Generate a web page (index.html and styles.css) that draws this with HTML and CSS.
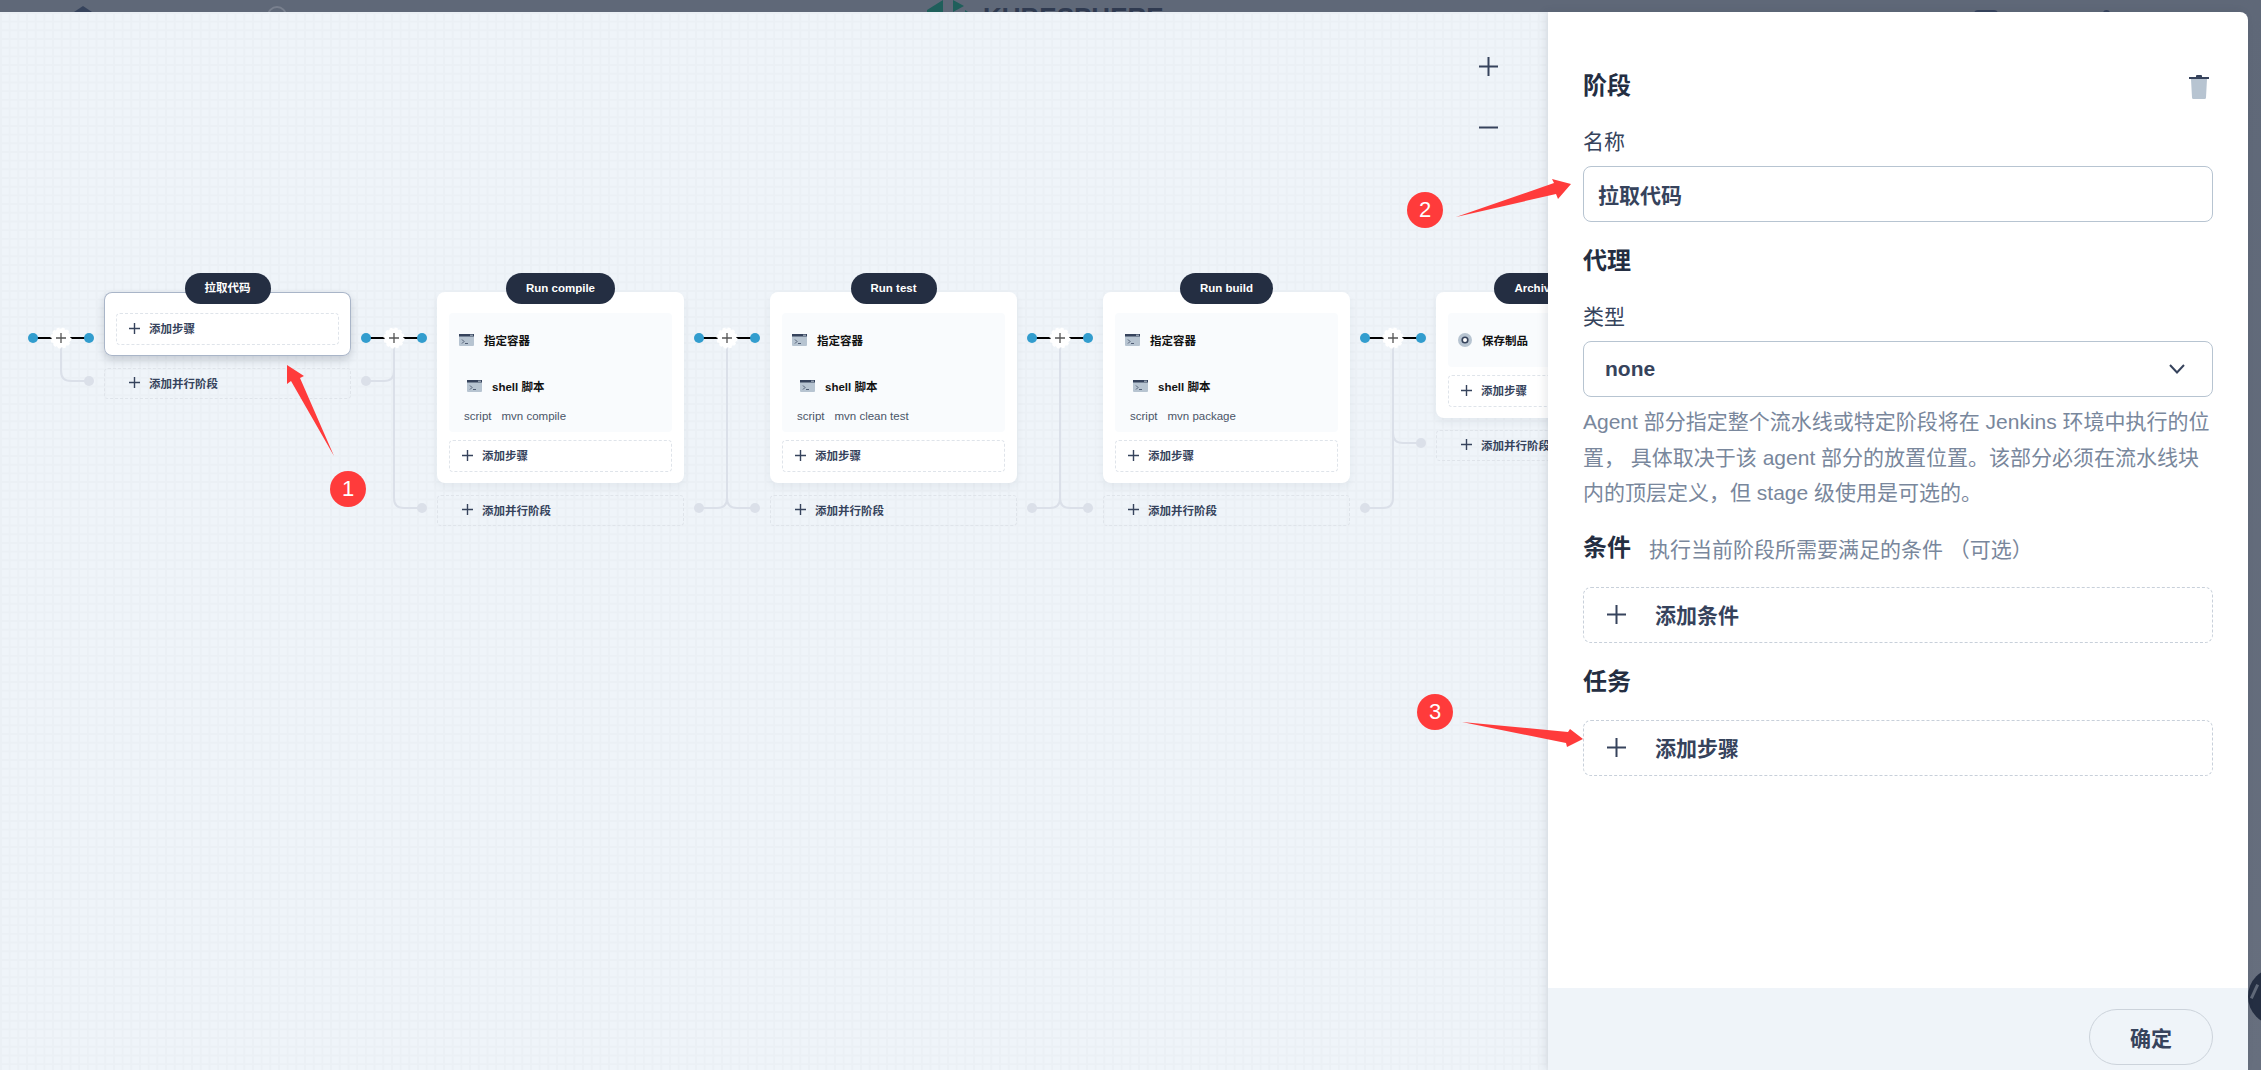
FILE: index.html

```html
<!DOCTYPE html>
<html lang="zh">
<head>
    <meta charset="UTF-8">
    <title>流水线</title>
    <link rel="stylesheet" href="styles.css">
</head>
<body>
    <svg class="defs" width="0" height="0">
        <symbol id="icon-plus" viewBox="0 0 11 11">
            <path d="M5.5 0V11M0 5.500H11" fill="none" stroke="currentColor" stroke-width="1.4"/>
        </symbol>
        <symbol id="icon-term" viewBox="0 0 15 12">
            <rect width="15" height="12" rx="1" fill="#b7c4d1"/>
            <rect width="15" height="2.500" fill="#36435c"/>
            <rect x="11" y="0.700" width="3" height="1" fill="#b7c4d1"/>
            <path d="M3 5.500L5 7.500L3 9.500M6 9.500H9" fill="none" stroke="#36435c" stroke-width="0.800"/>
        </symbol>
    </svg>

    <!-- page behind the dialog, only its lower edge shows -->
    <div class="topbar">
        <span class="top-bit top-home"></span>
        <span class="top-bit top-ring"></span>
        <svg class="top-logo" width="44" height="14" viewBox="0 0 44 14">
            <path d="M0 10L16 0V14H0Z M26 0L37 6L26 12Z M38 10L44 14H38Z" fill="#1f5f5b"/>
        </svg>
        <span class="top-brand">KUBESPHERE</span>
        <span class="top-bit top-user"></span>
        <span class="top-bit top-dot"></span>
    </div>

    <div class="main">
        <div class="canvas">
            <div class="zoom-btns">
                <svg class="zoom-icon" viewBox="0 0 19 19"><path d="M9.500 0V19M0 9.500H19" fill="none" stroke="#36435c" stroke-width="2"/></svg>
                <svg class="zoom-icon" viewBox="0 0 19 19"><path d="M0 9.500H19" fill="none" stroke="#36435c" stroke-width="2"/></svg>
            </div>

            <div class="pipeline">
                <svg class="connector" width="86" height="260" viewBox="0 0 86 260">
                    <path class="branch" d="M43 65V98Q43 108 53 108H71"/>
                    <circle class="dot-off" cx="71" cy="108" r="5"/>
                    <path class="wire" d="M15 65H71"/>
                    <circle class="dot" cx="15" cy="65" r="5"/>
                    <circle class="dot" cx="71" cy="65" r="5"/>
                    <circle class="node" cx="43" cy="65" r="9.500"/>
                    <path class="node-plus" d="M43 60V70M38 65H48"/>
                </svg>

                <div class="stage">
                    <div class="stage-name">拉取代码</div>
                    <div class="card card-selected">
                        <div class="add-btn"><svg class="plus"><use href="#icon-plus"/></svg>添加步骤</div>
                    </div>
                    <div class="add-parallel"><svg class="plus"><use href="#icon-plus"/></svg>添加并行阶段</div>
                </div>

                <svg class="connector" width="86" height="260" viewBox="0 0 86 260">
                    <path class="branch" d="M15 108H33Q43 108 43 98"/>
                    <path class="branch" d="M43 65V225Q43 235 53 235H71"/>
                    <circle class="dot-off" cx="15" cy="108" r="5"/>
                    <circle class="dot-off" cx="71" cy="235" r="5"/>
                    <path class="wire" d="M15 65H71"/>
                    <circle class="dot" cx="15" cy="65" r="5"/>
                    <circle class="dot" cx="71" cy="65" r="5"/>
                    <circle class="node" cx="43" cy="65" r="9.500"/>
                    <path class="node-plus" d="M43 60V70M38 65H48"/>
                </svg>

                <div class="stage">
                    <div class="stage-name">Run compile</div>
                    <div class="card">
                        <div class="step">
                            <div class="step-row"><svg class="term"><use href="#icon-term"/></svg>指定容器</div>
                            <div class="step-sub"><svg class="term"><use href="#icon-term"/></svg>shell 脚本</div>
                            <div class="step-args"><span>script</span><span>mvn compile</span></div>
                        </div>
                        <div class="add-btn"><svg class="plus"><use href="#icon-plus"/></svg>添加步骤</div>
                    </div>
                    <div class="add-parallel"><svg class="plus"><use href="#icon-plus"/></svg>添加并行阶段</div>
                </div>

                <svg class="connector" width="86" height="260" viewBox="0 0 86 260">
                    <path class="branch" d="M15 235H33Q43 235 43 225"/>
                    <path class="branch" d="M43 65V225Q43 235 53 235H71"/>
                    <circle class="dot-off" cx="15" cy="235" r="5"/>
                    <circle class="dot-off" cx="71" cy="235" r="5"/>
                    <path class="wire" d="M15 65H71"/>
                    <circle class="dot" cx="15" cy="65" r="5"/>
                    <circle class="dot" cx="71" cy="65" r="5"/>
                    <circle class="node" cx="43" cy="65" r="9.500"/>
                    <path class="node-plus" d="M43 60V70M38 65H48"/>
                </svg>

                <div class="stage">
                    <div class="stage-name">Run test</div>
                    <div class="card">
                        <div class="step">
                            <div class="step-row"><svg class="term"><use href="#icon-term"/></svg>指定容器</div>
                            <div class="step-sub"><svg class="term"><use href="#icon-term"/></svg>shell 脚本</div>
                            <div class="step-args"><span>script</span><span>mvn clean test</span></div>
                        </div>
                        <div class="add-btn"><svg class="plus"><use href="#icon-plus"/></svg>添加步骤</div>
                    </div>
                    <div class="add-parallel"><svg class="plus"><use href="#icon-plus"/></svg>添加并行阶段</div>
                </div>

                <svg class="connector" width="86" height="260" viewBox="0 0 86 260">
                    <path class="branch" d="M15 235H33Q43 235 43 225"/>
                    <path class="branch" d="M43 65V225Q43 235 53 235H71"/>
                    <circle class="dot-off" cx="15" cy="235" r="5"/>
                    <circle class="dot-off" cx="71" cy="235" r="5"/>
                    <path class="wire" d="M15 65H71"/>
                    <circle class="dot" cx="15" cy="65" r="5"/>
                    <circle class="dot" cx="71" cy="65" r="5"/>
                    <circle class="node" cx="43" cy="65" r="9.500"/>
                    <path class="node-plus" d="M43 60V70M38 65H48"/>
                </svg>

                <div class="stage">
                    <div class="stage-name">Run build</div>
                    <div class="card">
                        <div class="step">
                            <div class="step-row"><svg class="term"><use href="#icon-term"/></svg>指定容器</div>
                            <div class="step-sub"><svg class="term"><use href="#icon-term"/></svg>shell 脚本</div>
                            <div class="step-args"><span>script</span><span>mvn package</span></div>
                        </div>
                        <div class="add-btn"><svg class="plus"><use href="#icon-plus"/></svg>添加步骤</div>
                    </div>
                    <div class="add-parallel"><svg class="plus"><use href="#icon-plus"/></svg>添加并行阶段</div>
                </div>

                <svg class="connector" width="86" height="260" viewBox="0 0 86 260">
                    <path class="branch" d="M15 235H33Q43 235 43 225"/>
                    <path class="branch" d="M43 65V225"/>
                    <path class="branch" d="M43 160Q43 170 53 170H71"/>
                    <circle class="dot-off" cx="15" cy="235" r="5"/>
                    <circle class="dot-off" cx="71" cy="170" r="5"/>
                    <path class="wire" d="M15 65H71"/>
                    <circle class="dot" cx="15" cy="65" r="5"/>
                    <circle class="dot" cx="71" cy="65" r="5"/>
                    <circle class="node" cx="43" cy="65" r="9.500"/>
                    <path class="node-plus" d="M43 60V70M38 65H48"/>
                </svg>

                <div class="stage">
                    <div class="stage-name">Archive artifacts</div>
                    <div class="card">
                        <div class="step">
                            <div class="step-row">
                                <svg class="disc" viewBox="0 0 14 14">
                                    <circle cx="7" cy="7" r="7" fill="#b7c4d1"/>
                                    <circle cx="7" cy="7" r="2.800" fill="#fff" stroke="#36435c" stroke-width="1.600"/>
                                </svg>保存制品
                            </div>
                        </div>
                        <div class="add-btn"><svg class="plus"><use href="#icon-plus"/></svg>添加步骤</div>
                    </div>
                    <div class="add-parallel"><svg class="plus"><use href="#icon-plus"/></svg>添加并行阶段</div>
                </div>
            </div>
        </div>

        <div class="panel">
            <div class="panel-body">
                <div class="panel-head">
                    <h3 class="title">阶段</h3>
                    <svg class="trash" width="20" height="24" viewBox="0 0 20 24">
                        <path d="M2 4H18L17 22.500Q17 24 15.500 24H4.500Q3 24 3 22.500Z" fill="#b7c4d1"/>
                        <rect x="0" y="2" width="20" height="2" fill="#36435c"/>
                        <rect x="7" y="0" width="6" height="3" rx="1" fill="#36435c"/>
                    </svg>
                </div>
                <div class="label label-name">名称</div>
                <div class="field">拉取代码</div>

                <h3 class="title title-agent">代理</h3>
                <div class="label label-type">类型</div>
                <div class="field field-select">
                    none
                    <svg width="16" height="10" viewBox="0 0 16 10"><path d="M1 1L8 8.500L15 1" fill="none" stroke="#36435c" stroke-width="2"/></svg>
                </div>
                <p class="desc">Agent 部分指定整个流水线或特定阶段将在 Jenkins 环境中执行的位置， 具体取决于该 agent 部分的放置位置。该部分必须在流水线块内的顶层定义，但 stage 级使用是可选的。</p>

                <div class="cond-head">
                    <h3 class="title">条件</h3>
                    <span class="hint">执行当前阶段所需要满足的条件 （可选）</span>
                </div>
                <div class="add-large add-cond"><svg class="plus-large" viewBox="0 0 19 19"><path d="M9.500 0V19M0 9.500H19" fill="none" stroke="#36435c" stroke-width="2"/></svg><span class="add-text">添加条件</span></div>

                <h3 class="title title-task">任务</h3>
                <div class="add-large add-task"><svg class="plus-large" viewBox="0 0 19 19"><path d="M9.500 0V19M0 9.500H19" fill="none" stroke="#36435c" stroke-width="2"/></svg><span class="add-text">添加步骤</span></div>
            </div>
            <div class="panel-foot">
                <button class="ok-btn">确定</button>
            </div>
        </div>

        <div class="side-strip">
            <div class="tool-btn"></div>
        </div>
    </div>

    <!-- red annotations drawn over the screenshot -->
    <svg class="arrows" width="2261" height="1070" viewBox="0 0 2261 1070">
        <polygon points="287,365 304,376 300,378 334,456 291,381 287,384"/>
        <polygon points="1571,184 1552,179 1554,183 1456,217 1556,194 1558,199"/>
        <polygon points="1583,739 1570,729 1568,732 1462,722 1566,743 1567,747"/>
    </svg>
    <div class="badge badge-1">1</div>
    <div class="badge badge-2">2</div>
    <div class="badge badge-3">3</div>
</body>
</html>
```

FILE: styles.css

```css
* {
    box-sizing: border-box;
}
body {
    position: relative;
    margin: 0;
    height: 1070px;
    overflow: hidden;
    display: flex;
    flex-direction: column;
    font-family: "Liberation Sans", "Noto Sans CJK SC", sans-serif;
    color: #36435c;
    background: #5f6878;
}
.defs {
    position: absolute;
}

/* top edge */
.topbar {
    position: relative;
    height: 12px;
    flex: none;
    overflow: hidden;
    background: #5f6878;
}
.top-bit {
    position: absolute;
    display: block;
}
.top-home {
    left: 74px;
    top: 6px;
    width: 0;
    height: 0;
    border-left: 9px solid transparent;
    border-right: 9px solid transparent;
    border-bottom: 6px solid #36435c;
}
.top-ring {
    left: 267px;
    top: 6px;
    width: 20px;
    height: 20px;
    border: 2px solid #79808e;
    border-radius: 50%;
}
.top-user {
    left: 1974px;
    top: 10px;
    width: 24px;
    height: 8px;
    border-radius: 4px;
    background: #36435c;
}
.top-dot {
    left: 2103px;
    top: 10px;
    width: 7px;
    height: 7px;
    border-radius: 50%;
    background: #36435c;
}
.top-logo {
    position: absolute;
    left: 927px;
    top: 0;
}
.top-brand {
    position: absolute;
    left: 983px;
    top: 4px;
    font-size: 26px;
    line-height: 26px;
    font-weight: bold;
    color: #2f3a50;
}

.main {
    flex: 1;
    display: flex;
    min-height: 0;
}

/* pipeline canvas */
.canvas {
    position: relative;
    width: 1548px;
    flex: none;
    overflow: hidden;
    padding: 261px 0 0 18px;
    background-color: #eff4f9;
    background-image:
        linear-gradient(to right, #ebf0f5 1.5px, transparent 1.5px),
        linear-gradient(to bottom, #ebf0f5 1.5px, transparent 1.5px);
    background-size: 8.7px 8.7px;
}
.zoom-btns {
    position: absolute;
    left: 1479px;
    top: 45px;
    display: flex;
    flex-direction: column;
    gap: 42px;
}
.zoom-icon {
    display: block;
    width: 19px;
    height: 19px;
}
.pipeline {
    display: flex;
    align-items: flex-start;
}
.connector {
    flex: none;
    display: block;
}
.wire {
    fill: none;
    stroke: #000;
    stroke-width: 2;
}
.branch {
    fill: none;
    stroke: #dbe0e9;
    stroke-width: 2;
}
.dot {
    fill: #329dce;
}
.dot-off {
    fill: #dbe0e9;
}
.node {
    fill: #fff;
    stroke: #fff;
    stroke-width: 2;
    stroke-dasharray: 3 2;
}
.node-plus {
    fill: none;
    stroke: #555;
    stroke-width: 1.3;
}
.stage {
    width: 247px;
    flex: none;
    display: flex;
    flex-direction: column;
}
.stage-name {
    position: relative;
    z-index: 1;
    align-self: center;
    height: 31px;
    margin-bottom: -12px;
    padding: 0 20px;
    border-radius: 16px;
    background: #242e42;
    color: #fff;
    font-size: 11.5px;
    font-weight: bold;
    line-height: 31px;
    white-space: nowrap;
}
.card {
    padding: 21px 12px 11px;
    border-radius: 8px;
    background: #fff;
    box-shadow: 0 4px 8px rgba(36, 46, 66, 0.06);
}
.card-selected {
    box-shadow: inset 0 0 0 1px #a9b5c8, 0 4px 8px rgba(36, 46, 66, 0.2);
}
.step {
    margin-bottom: 8px;
    border-radius: 4px;
    background: #f9fbfd;
    font-size: 11.5px;
    font-weight: bold;
    color: #111;
}
.step-row {
    height: 54px;
    padding-left: 10px;
    display: flex;
    align-items: center;
    gap: 10px;
}
.step-sub {
    height: 38px;
    padding-left: 18px;
    display: flex;
    align-items: center;
    gap: 10px;
}
.term {
    width: 15px;
    height: 12px;
    flex: none;
}
.disc {
    width: 14px;
    height: 14px;
    flex: none;
}
.step-args {
    height: 27px;
    padding: 2px 0 0 15px;
    display: flex;
    gap: 10px;
    font-weight: normal;
    line-height: 18px;
    color: #4a5568;
}
.add-btn,
.add-parallel {
    display: flex;
    align-items: center;
    padding-bottom: 2px;
    border: 1px dashed #dfe4ea;
    border-radius: 4px;
    font-size: 11.5px;
    font-weight: bold;
    color: #36435c;
    white-space: nowrap;
}
.add-btn {
    height: 32px;
    padding-left: 12px;
    gap: 9px;
}
.add-parallel {
    height: 31px;
    margin-top: 12px;
    padding-left: 24px;
    gap: 9px;
}
.plus {
    width: 11px;
    height: 11px;
    flex: none;
}

/* stage dialog */
.panel {
    position: relative;
    z-index: 1;
    width: 700px;
    flex: none;
    display: flex;
    flex-direction: column;
    border-top-right-radius: 8px;
    background: #fff;
    box-shadow: -3px 0 8px rgba(36, 46, 66, 0.1);
}
.panel-body {
    flex: 1;
    padding: 58px 35px 0;
}
.panel-head {
    display: flex;
    justify-content: space-between;
    align-items: flex-start;
}
.trash {
    margin: 5px 4px 0 0;
}
.title {
    margin: 0;
    font-size: 24px;
    line-height: 32px;
    font-weight: bold;
    color: #242e42;
}
.label {
    margin-top: 25px;
    font-size: 21px;
    line-height: 30px;
    color: #36435c;
}
.field {
    height: 56px;
    margin-top: 9px;
    padding: 0 14px;
    display: flex;
    align-items: center;
    justify-content: space-between;
    border: 1px solid #b7c4d1;
    border-radius: 8px;
    font-size: 21px;
    font-weight: bold;
}
.field-select {
    padding: 0 27px 0 21px;
}
.title-agent {
    margin-top: 23px;
}
.desc {
    margin: 7px 0 0;
    font-size: 21px;
    line-height: 35.500px;
    color: #79879c;
}
.cond-head {
    margin-top: 21px;
    display: flex;
    align-items: center;
    gap: 18px;
}
.hint {
    font-size: 21px;
    color: #79879c;
}
.add-large {
    height: 56px;
    padding-left: 23px;
    display: flex;
    align-items: center;
    gap: 29px;
    border: 1px dashed #c8d0da;
    border-radius: 8px;
    font-size: 21px;
    font-weight: bold;
}
.add-text {
    margin-bottom: 2px;
}
.add-cond {
    margin-top: 23px;
}
.title-task {
    margin-top: 23px;
}
.add-task {
    margin-top: 22px;
}
.plus-large {
    width: 19px;
    height: 19px;
    flex: none;
}
.panel-foot {
    height: 82px;
    flex: none;
    padding: 21px 35px 0 0;
    display: flex;
    justify-content: flex-end;
    align-items: flex-start;
    background: #eff4f9;
}
.ok-btn {
    width: 124px;
    height: 56px;
    border: 1px solid #ccd3db;
    border-radius: 28px;
    background: transparent;
    font-family: inherit;
    font-size: 21px;
    font-weight: bold;
    color: #36435c;
}

.side-strip {
    position: relative;
    flex: 1;
    overflow: hidden;
    background: linear-gradient(#5f6878, #676f7e);
}
.tool-btn {
    position: absolute;
    left: 0;
    top: 956px;
    width: 57px;
    height: 57px;
    border-radius: 50%;
    background: #242e42;
}
.tool-btn::after {
    content: "";
    position: absolute;
    left: 5px;
    top: 16px;
    width: 3px;
    height: 15px;
    background: #5f6878;
    transform: rotate(25deg);
}

/* annotations */
.arrows {
    position: absolute;
    left: 0;
    top: 0;
    z-index: 2;
    fill: #ff3b3b;
}
.badge {
    position: absolute;
    z-index: 2;
    width: 36px;
    height: 36px;
    border-radius: 50%;
    background: #ff3b3b;
    color: #fff;
    font-size: 22px;
    line-height: 36px;
    text-align: center;
}
.badge-1 {
    left: 330px;
    top: 471px;
}
.badge-2 {
    left: 1407px;
    top: 192px;
}
.badge-3 {
    left: 1417px;
    top: 694px;
}
```
